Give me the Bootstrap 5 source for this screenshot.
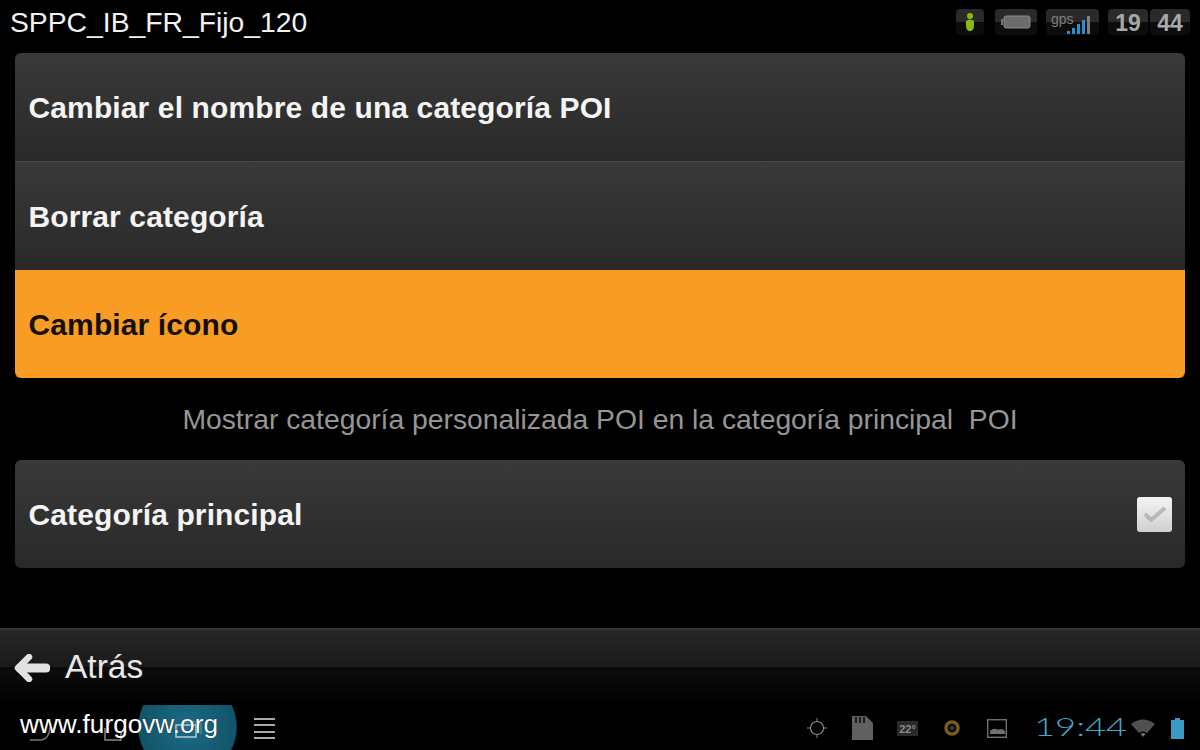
<!DOCTYPE html>
<html lang="es">
<head>
  <meta charset="UTF-8">
  <title>Categoría POI</title>
  <link href="https://cdn.jsdelivr.net/npm/bootstrap@5.3.3/dist/css/bootstrap.min.css" rel="stylesheet">
  <script src="https://cdn.jsdelivr.net/npm/bootstrap@5.3.3/dist/js/bootstrap.bundle.min.js"></script>
  <style>
    html, body { height: 750px; }
    body { width: 1200px; background: #000; color: #fff; overflow: hidden; font-family: "Liberation Sans", Arial, sans-serif; position: relative; }
    .top-bar { height: 53px; padding: 0 10px 0 10px; }
    .top-title { font-size: 28.3px; line-height: 45px; color: #f2f2f2; }
    .stat-row { margin-top: 9px; gap: 9px; }
    .stat { height: 26px; border-radius: 4px; background: linear-gradient(#2a2a2a 50%, #0c0c0c 50%); color: #a8a8a8; }
    .stat-person { width: 28px; margin-right: 2px; }
    .stat-num { width: 40px; font-size: 23px; font-weight: bold; line-height: 28px; text-align: center; }
    .menu-box { margin: 0 15px; border-radius: 6px; overflow: hidden; }
    .menu-row { height: 108px; padding-left: 13.5px; font-size: 30px; font-weight: bold; letter-spacing: .12px; color: #f4f4f4; background: linear-gradient(#393939, #292929); }
    .menu-row + .menu-row { border-top: 1px solid #454545; height: 109px; }
    .menu-row.on { background: #f89c24; color: #141008; border-top: 0; height: 108px; }
    .hint { height: 82px; padding-top: 1px; font-size: 28.3px; color: #969696; }
    .check-box { width: 35px; height: 35px; margin-right: 13px; border-radius: 3px; background: linear-gradient(#f4f4f4, #d0d0d0); }
    .act-bar { margin-top: 60px; height: 77px; padding-left: 14px; padding-top: 2px; background: linear-gradient(#3a3a3a, #262626 3px, #1a1a1a 50%, #040404 52%, #0c0c0c 53%, #000); font-size: 33.5px; color: #e8e8e8; gap: 15px; }
    .sys-bar { height: 45px; background: #000; padding-right: 16px; }
    .glow { left: 138px; top: 0; width: 99px; height: 45px; background: radial-gradient(circle 50px at 50% 22px, #1a6c88 0, #125469 97%, transparent 100%); }
    .sys-clock { width: 92px; margin-right: 5px; margin-top: -3px; font-family: "Lato", sans-serif; font-weight: 300; font-size: 26px; line-height: 45px; color: #45a6cd; white-space: nowrap; transform: scaleX(1.4); transform-origin: left center; }
    .temp-tile { width: 21px; height: 15px; background: #2a2a2a; color: #8c8c8c; font-size: 11px; font-weight: bold; text-align: center; line-height: 16px; }
    .mark-url { left: 20px; top: 705px; font-size: 26.2px; color: #fff; text-shadow: 0 0 1px #000; }
  </style>
</head>
<body>
  <div class="top-bar d-flex justify-content-between align-items-start">
    <div class="top-title">SPPC_IB_FR_Fijo_120</div>
    <div class="stat-row d-flex align-items-center">
      <div class="stat stat-person d-flex align-items-center justify-content-center">
        <svg width="12" height="20" viewBox="0 0 12 20"><circle cx="6" cy="4" r="3" fill="#8cb814"/><path d="M2 9q4-3 8 0v4q0 6-4 6t-4-6z" fill="#8cb814"/></svg>
      </div>
      <div class="stat d-flex align-items-center justify-content-center" style="width:42px">
        <svg width="30" height="14" viewBox="0 0 30 14"><rect x="3" y="1" width="26" height="12" rx="2" fill="#6c6c6c" stroke="#8a8a8a"/><rect y="4" width="2" height="6" fill="#777"/></svg>
      </div>
      <div class="stat position-relative" style="width:53px">
        <svg width="53" height="26" viewBox="0 0 53 26"><rect x="21" y="22" width="3" height="3" fill="#2a8fd0"/><rect x="26" y="19" width="3" height="6" fill="#2a8fd0"/><rect x="31" y="15" width="3" height="10" fill="#2a8fd0"/><rect x="36" y="11" width="3" height="14" fill="#2a8fd0"/><rect x="41" y="7" width="3" height="18" fill="#808080"/></svg>
        <span class="position-absolute" style="left:5px;top:0;font-size:14px;color:#808080">gps</span>
      </div>
      <div class="d-flex" style="column-gap:2px">
        <div class="stat stat-num">19</div>
        <div class="stat stat-num">44</div>
      </div>
    </div>
  </div>

  <div class="menu-box">
    <div class="menu-row d-flex align-items-center">Cambiar el nombre de una categoría POI</div>
    <div class="menu-row d-flex align-items-center">Borrar categoría</div>
    <div class="menu-row on d-flex align-items-center">Cambiar ícono</div>
  </div>

  <div class="hint d-flex align-items-center justify-content-center">Mostrar categoría personalizada POI en la categoría principal&nbsp; POI</div>

  <div class="menu-box">
    <div class="menu-row d-flex align-items-center justify-content-between">
      <span>Categoría principal</span>
      <div class="check-box d-flex align-items-center justify-content-center">
        <svg width="26" height="20" viewBox="0 0 26 20"><path d="M3 10l6 6L23 4" fill="none" stroke="#b8b8b8" stroke-width="4"/></svg>
      </div>
    </div>
  </div>

  <div class="act-bar d-flex align-items-center">
    <svg width="36" height="28" viewBox="0 0 36 28"><path d="M15 3L4 14l11 11" fill="none" stroke="#e2e2e2" stroke-width="6.500" stroke-linecap="round" stroke-linejoin="round"/><path d="M6 14h26" stroke="#e2e2e2" stroke-width="9" stroke-linecap="round"/></svg>
    <span>Atrás</span>
  </div>

  <div class="sys-bar d-flex align-items-center position-relative">
    <div class="glow position-absolute"></div>
    <svg class="position-absolute" style="left:29px;top:20px" width="23" height="17" viewBox="0 0 23 17"><path d="M1 15h10q9 0 10-13" fill="none" stroke="#777" stroke-width="1.5"/></svg>
    <svg class="position-absolute" style="left:104px;top:22px" width="19" height="14" viewBox="0 0 19 14"><path d="M1 1v12h16V4" fill="none" stroke="#888" stroke-width="1.5"/></svg>
    <svg class="position-absolute" style="left:174px;top:15px" width="30" height="18" viewBox="0 0 30 18"><path d="M2 5h20v12H2z" fill="none" stroke="#b8ccd4" stroke-width="1.5"/><path d="M8 2h19v12" fill="none" stroke="#3f8aa4" stroke-width="1.5"/></svg>
    <svg class="position-absolute" style="left:254px;top:12px" width="21" height="22" viewBox="0 0 21 22"><path d="M0 2h21M0 8h21M0 15h21M0 21h21" stroke="#aaa" stroke-width="2"/></svg>

    <div class="ms-auto d-flex align-items-center" style="padding-top:1px">
      <svg width="20" height="20" viewBox="0 0 20 20" style="margin-right:25px"><circle cx="10" cy="10" r="6.5" fill="none" stroke="#8a8a8a" stroke-width="1.2"/><path d="M10 0v3M10 17v3M0 10h3M17 10h3" stroke="#8a8a8a"/></svg>
      <svg width="21" height="24" viewBox="0 0 21 24" style="margin-right:24px"><path d="M0 0h14l7 7v17H0z" fill="#606060"/><path d="M4 1v6M8 1v6M12 1v6" stroke="#1c1c1c" stroke-width="2"/></svg>
      <div class="temp-tile" style="margin-right:25px">22°</div>
      <svg width="18" height="20" viewBox="0 0 18 20" style="margin-right:26px"><circle cx="9" cy="10" r="6" fill="none" stroke="#7a5a1c" stroke-width="3.5"/><circle cx="9" cy="10" r="2.5" fill="#2c3a40"/></svg>
      <svg width="20" height="19" viewBox="0 0 20 19" style="margin-right:27px"><rect x=".7" y=".7" width="18.6" height="17.6" fill="none" stroke="#707070" stroke-width="1.4"/><path d="M3 15v-3q3-3 6-2t5 0q3 0 4 3v2z" fill="#707070"/></svg>
      <div class="sys-clock">19:44</div>
      <svg width="24" height="19" viewBox="0 0 24 19" style="margin-right:16px"><path d="M0 5q12-9 24 0l-8 9q-4-3-8 0z" fill="#505050"/><path d="M9.500 15q2.500-2 5 0L12 18z" fill="#707070"/></svg>
      <svg width="13" height="21" viewBox="0 0 13 21"><rect y="2" width="13" height="19" fill="#3a9ac4"/><rect x="4" width="5" height="2" fill="#3a9ac4"/></svg>
    </div>
  </div>

  <div class="mark-url position-absolute">www.furgovw.org</div>
</body>
</html>
